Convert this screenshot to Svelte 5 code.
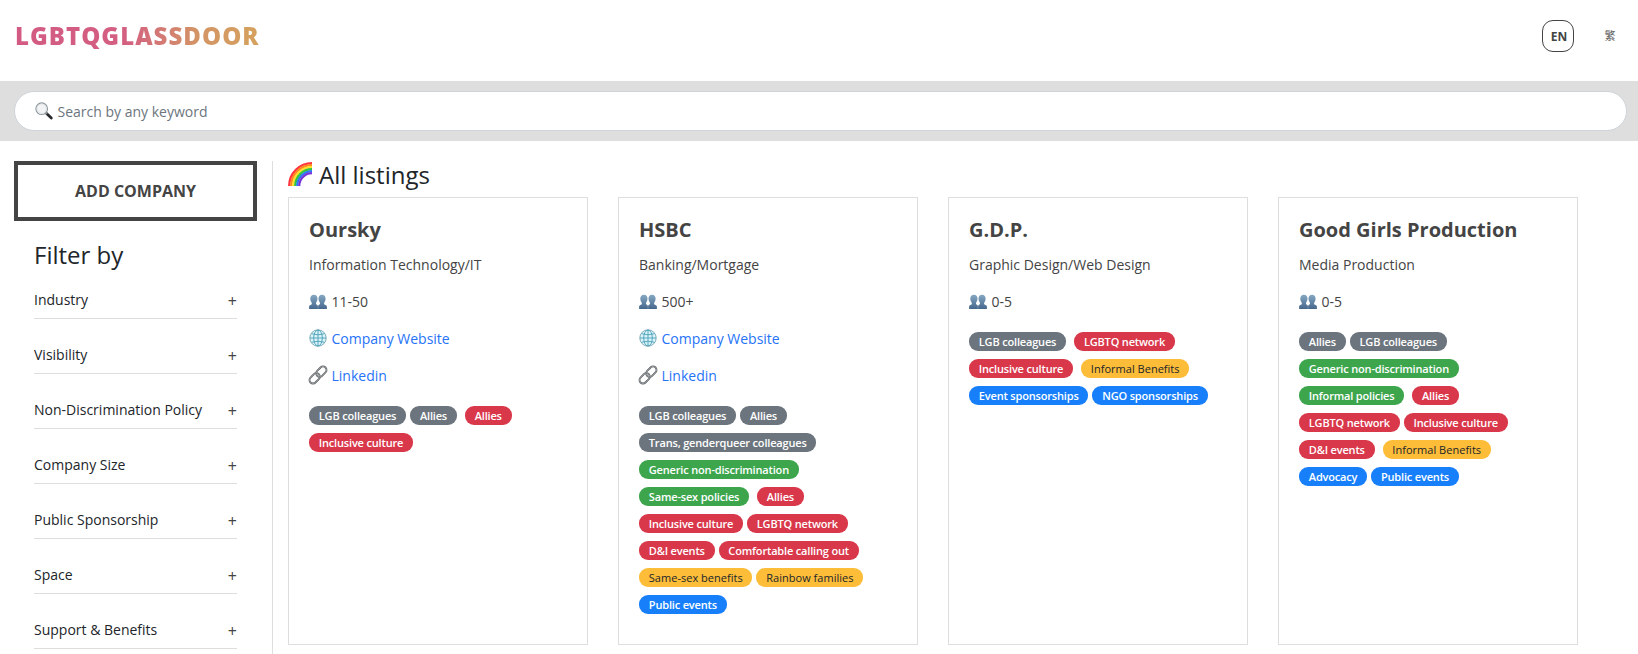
<script>
  const filters = ['Industry', 'Visibility', 'Non-Discrimination Policy', 'Company Size', 'Public Sponsorship', 'Space', 'Support & Benefits'];

  // Each tag: [label, category]
  const companies = [
    {
      name: 'Oursky', industry: 'Information Technology/IT', size: '11-50', links: true,
      rows: [
        [['LGB colleagues', 'visibility'], ['Allies', 'visibility'], ['Allies', 'space']],
        [['Inclusive culture', 'space']]
      ]
    },
    {
      name: 'HSBC', industry: 'Banking/Mortgage', size: '500+', links: true,
      rows: [
        [['LGB colleagues', 'visibility'], ['Allies', 'visibility']],
        [['Trans, genderqueer colleagues', 'visibility']],
        [['Generic non-discrimination', 'policy']],
        [['Same-sex policies', 'policy'], ['Allies', 'space']],
        [['Inclusive culture', 'space'], ['LGBTQ network', 'space']],
        [['D&I events', 'space'], ['Comfortable calling out', 'space']],
        [['Same-sex benefits', 'benefits'], ['Rainbow families', 'benefits']],
        [['Public events', 'sponsorship']]
      ]
    },
    {
      name: 'G.D.P.', industry: 'Graphic Design/Web Design', size: '0-5', links: false,
      rows: [
        [['LGB colleagues', 'visibility'], ['LGBTQ network', 'space']],
        [['Inclusive culture', 'space'], ['Informal Benefits', 'benefits']],
        [['Event sponsorships', 'sponsorship'], ['NGO sponsorships', 'sponsorship']]
      ]
    },
    {
      name: 'Good Girls Production', industry: 'Media Production', size: '0-5', links: false,
      rows: [
        [['Allies', 'visibility'], ['LGB colleagues', 'visibility']],
        [['Generic non-discrimination', 'policy']],
        [['Informal policies', 'policy'], ['Allies', 'space']],
        [['LGBTQ network', 'space'], ['Inclusive culture', 'space']],
        [['D&I events', 'space'], ['Informal Benefits', 'benefits']],
        [['Advocacy', 'sponsorship'], ['Public events', 'sponsorship']]
      ]
    }
  ];

  const rainbow = ['#ff3640', '#ff8a1c', '#ffe02c', '#35c43c', '#2f7bf0', '#7a35d8'];
</script>

<div class="page">
  <header>
    <div class="logo">LGBTQGLASSDOOR</div>
    <nav>
      <span class="lang active">EN</span>
      <span class="lang zh">繁</span>
    </nav>
  </header>

  <div class="searchbar">
    <div class="search">
      <svg width="18" height="18" viewBox="0 0 18 18">
        <path d="M11.6 11.6 16.3 16" stroke="#25282a" stroke-width="2.8" stroke-linecap="round" />
        <path d="M10.3 10.3 12 12" stroke="#8a9197" stroke-width="1.6" />
        <circle cx="6.7" cy="6.7" r="5.8" fill="#f1f3f4" stroke="#8f999f" stroke-width="1.2" />
        <circle cx="6.7" cy="6.7" r="4.7" fill="none" stroke="#dce0e3" stroke-width=".7" />
      </svg>
      <span>Search by any keyword</span>
    </div>
  </div>

  <main>
    <aside>
      <button>ADD COMPANY</button>
      <div class="filters">
        <h2>Filter by</h2>
        {#each filters as f}
          <div class="filter"><span>{f}</span><span class="plus">+</span></div>
        {/each}
      </div>
    </aside>

    <section>
      <h2 class="heading">
        <svg width="24" height="24" viewBox="0 0 24 24">
          {#each rainbow as color, i}
            <path d="M{1.2 + i * 2} 24A{22.8 - i * 2} {22.8 - i * 2} 0 0 1 24 {1.2 + i * 2}" fill="none" stroke={color} stroke-width="2.3" />
          {/each}
        </svg>
        <span>All listings</span>
      </h2>
      <div class="cards">
        {#each companies as c}
          <article>
            <h3>{c.name}</h3>
            <p>{c.industry}</p>
            <p>
              <svg width="18" height="18" viewBox="0 0 18 18">
                <defs>
                  <linearGradient id="bust" x1="0" y1="0" x2="0" y2="1">
                    <stop offset="0" stop-color="#86a9c4" />
                    <stop offset="1" stop-color="#46678c" />
                  </linearGradient>
                </defs>
                <g fill="url(#bust)" transform="translate(0 .9)">
                  <path d="M4.9 1.8C7.5 1.8 8.6 3.5 8.5 5.8 8.4 7.6 7.8 9 7 9.8V11.3C8 11.8 8.9 12.1 8.9 13.4V16H.1V13.6C.1 12.2 1.6 12 2.8 11.3V9.8C1.9 9 1.4 7.6 1.3 5.8 1.2 3.5 2.4 1.8 4.9 1.8Z" />
                  <path d="M13 1.8C15.5 1.8 16.7 3.5 16.6 5.8 16.5 7.6 16 9 15.1 9.8V11.3C16.3 12 17.9 12.2 17.9 13.6V16H9.1V13.4C9.1 12.1 10 11.8 11 11.3V9.8C10.2 9 9.6 7.6 9.5 5.8 9.4 3.5 10.5 1.8 13 1.8Z" />
                </g>
              </svg>
              <span>{c.size}</span>
            </p>
            {#if c.links}
              <p>
                <svg width="18" height="18" viewBox="0 0 18 18" fill="none">
                  <circle cx="9" cy="9" r="8.2" fill="#dcf4f9" stroke="#7dacba" />
                  <path d="M9 1V17M1 9H17M2.5 4.7Q9 7 15.5 4.7M2.5 13.3Q9 11 15.5 13.3" stroke="#489fb8" stroke-width=".9" />
                  <ellipse cx="9" cy="9" rx="4.3" ry="8" stroke="#489fb8" stroke-width=".9" />
                </svg>
                <a href="#website">Company Website</a>
              </p>
              <p>
                <svg width="18" height="18" viewBox="0 0 18 18" fill="none">
                  <g transform="rotate(-45 9 9)">
                    <rect x="-1.6" y="5.5" width="11.8" height="7" rx="3.5" stroke="#5c6063" stroke-width="1.8" />
                    <rect x="-1.6" y="5.5" width="11.8" height="7" rx="3.5" stroke="#c9cccf" stroke-width=".5" />
                    <rect x="7.8" y="5.5" width="11.8" height="7" rx="3.5" stroke="#5c6063" stroke-width="1.8" />
                    <rect x="7.8" y="5.5" width="11.8" height="7" rx="3.5" stroke="#c9cccf" stroke-width=".5" />
                  </g>
                </svg>
                <a href="#linkedin">Linkedin</a>
              </p>
            {/if}
            {#each c.rows as row}
              <div class="tags">
                {#each row as [label, kind], i}
                  <span class="tag {kind}" class:group={i > 0 && row[i - 1][1] !== kind}>{label}</span>
                {/each}
              </div>
            {/each}
          </article>
        {/each}
      </div>
    </section>
  </main>
</div>

<style>
  :global(body) { background: #fff; overflow: hidden; }
  .page {
    height: 654px;
    overflow: hidden;
    font: 14px/21px "Open Sans", "Noto Sans CJK TC", sans-serif;
    color: #212529;
  }
  .page * { box-sizing: border-box; }
  svg { display: block; flex: none; overflow: visible; }
  header {
    height: 81px;
    padding: 20px 12px 0 15px;
    display: flex;
    justify-content: space-between;
    align-items: flex-start;
  }
  .logo {
    font-size: 24px;
    line-height: 32px;
    font-weight: 800;
    letter-spacing: 1.03px;
    background: linear-gradient(90deg, #d35b83 0%, #d35f81 45%, #d39565 75%, #d6a25e 100%);
    background-clip: text;
    -webkit-background-clip: text;
    color: transparent;
  }
  nav { display: flex; gap: 20px; }
  .lang {
    width: 32px;
    height: 32px;
    border: 1px solid transparent;
    border-radius: 11px;
    font-size: 12px;
    line-height: 31px;
    text-align: center;
    color: #666;
  }
  .active { border-color: #444; color: #444; font-weight: 700; padding-left: 2px; }
  .zh { font-size: 11px; line-height: 29px; }
  .searchbar { height: 60px; background: #dedede; padding: 10px 11px 10px 14px; }
  .search {
    height: 40px;
    border: 1px solid #ced4da;
    border-radius: 20px;
    background: #fff;
    padding: 1px 20px 0;
    display: flex;
    align-items: center;
    gap: 4.5px;
    color: #6c757d;
  }
  .search svg { margin-top: -1px; }
  main { display: flex; padding: 20px 0 0 14px; }
  aside { width: 259px; height: 493px; border-right: 1px solid #dedede; padding-right: 15px; }
  button {
    display: block;
    width: 243px;
    height: 60px;
    border: 4px solid #444;
    background: #fff;
    color: #444;
    font: 700 16px/24px "Open Sans", sans-serif;
    padding: 0;
  }
  .filters { padding: 19px 20px 0; }
  h2 { margin: 0; font-size: 24px; line-height: 29px; font-weight: 400; }
  .filters h2 { margin-bottom: 20px; }
  .filter {
    width: 203px;
    height: 30px;
    border-bottom: 1px solid #dedede;
    margin-bottom: 25px;
    display: flex;
    justify-content: space-between;
  }
  .plus { color: #444; padding-top: 2px; font-size: 16px; }
  section { padding-left: 15px; }
  .heading { display: flex; gap: 7px; height: 36px; line-height: 27px; }
  .heading svg { margin-top: 1px; }
  .cards { display: flex; gap: 30px; }
  article { width: 300px; height: 448px; border: 1px solid #dedede; padding: 20px; color: #444; }
  h3 { margin: 0 0 12px; font-size: 20px; line-height: 24px; font-weight: 700; white-space: nowrap; }
  p { margin: 0 0 16px; height: 21px; display: flex; gap: 4.5px; }
  p svg { margin-top: 1px; }
  a { color: #2673f7; text-decoration: none; }
  .tags { height: 27px; padding-top: 4px; display: flex; gap: 4px; }
  .tag {
    height: 19px;
    padding: 0 9.8px;
    border-radius: 9px;
    color: #fff;
    font-size: 11px;
    line-height: 20px;
    font-weight: 600;
    letter-spacing: -.17px;
    white-space: nowrap;
  }
  .group { margin-left: 4px; }
  .visibility { background: #6c757d; }
  .space { background: #d9374a; }
  .policy { background: #3da64d; }
  .benefits { background: #fdbd39; color: #212529; font-weight: 400; letter-spacing: .02px; }
  .sponsorship { background: #187ffb; }
</style>
